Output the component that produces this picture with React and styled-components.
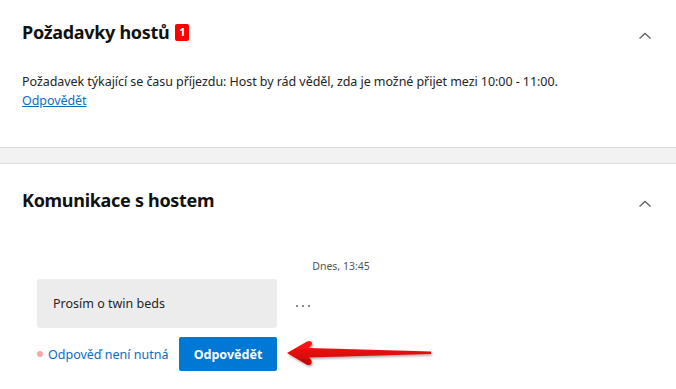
import React from "react"
import styled, { createGlobalStyle } from "styled-components"

const GlobalStyle = createGlobalStyle`
  body {
    margin: 0;
    background: #fff;
    font-family: "Noto Sans", "Open Sans", sans-serif;
    color: #242424;
  }
`

const Chevron = () => (
  <ChevronIcon width="14" height="8" viewBox="0 0 14 8">
    <path d="M1.5 6.5 L7 1.5 L12.5 6.5" fill="none" stroke="#616161" strokeWidth="1.3" />
  </ChevronIcon>
)

const Arrow = () => (
  <ArrowSvg width="150" height="30" viewBox="0 0 150 30">
    <defs>
      <linearGradient id="arr" x1="0" y1="0" x2="0" y2="1">
        <stop offset="0" stopColor="#ff1a1a" />
        <stop offset="1" stopColor="#c80000" />
      </linearGradient>
      <filter id="sh" x="-10%" y="-30%" width="120%" height="180%">
        <feDropShadow dx="1" dy="1.5" stdDeviation="0.8" floodColor="#000" floodOpacity="0.35" />
      </filter>
    </defs>
    <path
      filter="url(#sh)"
      fill="url(#arr)"
      d="M2 14 L22 2.5 Q26 1 27 4 Q27.5 6 24 9 L146 12.6 L146 15 L24 18.5 Q27.5 21.5 26.5 24.5 Q25 27 21.5 25.5 Z"
    />
  </ArrowSvg>
)

const App = () => (
  <Page>
    <GlobalStyle />
    <Section>
      <Header>
        <Title>
          Požadavky hostů <Badge>1</Badge>
        </Title>
        <Chevron />
      </Header>
      <RequestText>
        Požadavek týkající se času příjezdu: Host by rád věděl, zda je možné přijet mezi 10:00 - 11:00.
        <br />
        <TextLink href="#">Odpovědět</TextLink>
      </RequestText>
    </Section>
    <Band />
    <Section>
      <Header>
        <Title>Komunikace s hostem</Title>
        <Chevron />
      </Header>
      <Thread>
        <Timestamp>Dnes, 13:45</Timestamp>
        <MessageRow>
          <Bubble>Prosím o twin beds</Bubble>
          <Dots>
            <i />
            <i />
            <i />
          </Dots>
        </MessageRow>
        <ActionRow>
          <Status>Odpověď není nutná</Status>
          <ReplyButton>Odpovědět</ReplyButton>
          <Arrow />
        </ActionRow>
      </Thread>
    </Section>
  </Page>
)

const Page = styled.div`
  width: 676px;
  height: 389px;
  overflow: hidden;
  background: #fff;
`

const Section = styled.section`
  padding: 20px 22px 0;
  height: 147px;
  box-sizing: border-box;

  & + div + & {
    padding-top: 24px;
    height: auto;
  }
`

const Header = styled.div`
  display: flex;
  align-items: center;
  justify-content: space-between;
  height: 24px;
`

const Title = styled.h2`
  margin: 0;
  display: flex;
  align-items: center;
  gap: 6px;
  font-size: 18px;
  line-height: 24px;
  font-weight: 700;
  color: #111;
  letter-spacing: -0.3px;
`

const Badge = styled.span`
  display: inline-flex;
  align-items: center;
  justify-content: center;
  width: 14px;
  height: 17px;
  border-radius: 2px;
  background: #ff0000;
  color: #fff;
  font-size: 11px;
  font-weight: 700;
  letter-spacing: 0;
`

const ChevronIcon = styled.svg`
  margin: 8px 2px 0 0;
`

const RequestText = styled.p`
  margin: 28px 0 0;
  font-size: 12.5px;
  line-height: 19px;
  color: #242424;
  letter-spacing: -0.06px;
`

const TextLink = styled.a`
  color: #0f6cbd;
  text-decoration: underline;
`

const Band = styled.div`
  height: 15px;
  background: #f2f2f2;
  border-top: 1px solid #dcdcdc;
  border-bottom: 1px solid #dcdcdc;
`

const Thread = styled.div`
  margin: 47px 9px 0 15px;
`

const Timestamp = styled.div`
  text-align: center;
  font-size: 10.5px;
  line-height: 14px;
  color: #555;
`

const MessageRow = styled.div`
  display: flex;
  align-items: center;
  margin-top: 6px;
`

const Bubble = styled.div`
  width: 240px;
  height: 49px;
  box-sizing: border-box;
  padding: 0 16px;
  display: flex;
  align-items: center;
  background: #ececec;
  border-radius: 3px;
  font-size: 12.5px;
  color: #242424;
`

const Dots = styled.div`
  display: flex;
  gap: 4px;
  margin-left: 19px;
  margin-top: 4px;

  i {
    width: 2px;
    height: 2px;
    background: #8a8a8a;
  }
`

const ActionRow = styled.div`
  display: flex;
  align-items: center;
  margin-top: 9px;
`

const Status = styled.span`
  display: flex;
  align-items: center;
  gap: 5px;
  font-size: 12.5px;
  color: #0f6cbd;
  width: 142px;

  &::before {
    content: "";
    width: 6px;
    height: 6px;
    border-radius: 50%;
    background: #f4a7a7;
  }
`

const ReplyButton = styled.button`
  width: 98px;
  height: 34px;
  border: none;
  border-radius: 2px;
  background: #0078d4;
  color: #fff;
  font-family: inherit;
  font-size: 12.5px;
  font-weight: 700;
`

const ArrowSvg = styled.svg`
  margin-left: 8px;
`

export default App
